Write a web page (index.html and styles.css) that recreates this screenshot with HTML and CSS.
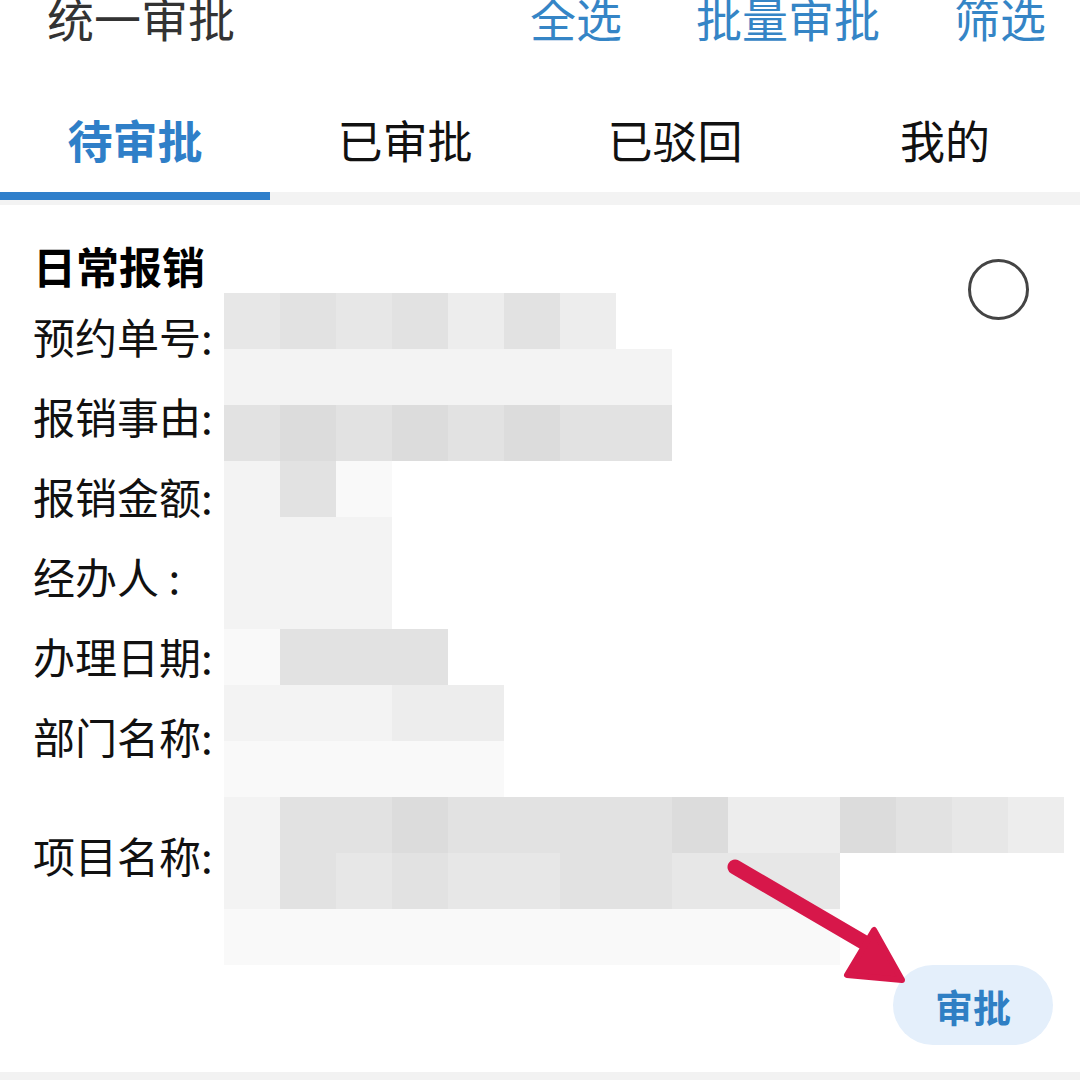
FILE: index.html
```html
<!DOCTYPE html>
<html lang="zh-CN">
<head>
    <meta charset="UTF-8">
    <meta name="viewport" content="width=device-width, initial-scale=1.0">
    <title>统一审批</title>
    <link rel="stylesheet" href="styles.css">
</head>
<body>
    <div class="topbar">
        <div class="title">统一审批</div>
        <div class="actions">
            <span class="action">全选</span>
            <span class="action">批量审批</span>
            <span class="action">筛选</span>
        </div>
    </div>

    <div class="tabs">
        <div class="tab active">待审批</div>
        <div class="tab">已审批</div>
        <div class="tab">已驳回</div>
        <div class="tab">我的</div>
    </div>
    <div class="tab-track"><div class="tab-indicator"></div></div>

    <section class="card">
        <div class="card-head">
            <h2>日常报销</h2>
            <span class="check"></span>
        </div>
        <div class="field">预约单号:</div>
        <div class="field">报销事由:</div>
        <div class="field">报销金额:</div>
        <div class="field">经办人 :</div>
        <div class="field">办理日期:</div>
        <div class="field">部门名称:</div>
        <div class="field tall">项目名称:</div>
        <div class="card-foot">
            <button class="approve">审批</button>
        </div>

        <!-- redacted values -->
        <div class="mosaic">
            <div class="mrow"><i class="g3"></i><i class="g2"></i><i class="g3"></i><i class="g2"></i><i class="g4"></i><i class="g2"></i><i class="g4"></i></div>
            <div class="mrow"><i class="g5"></i><i class="g5"></i><i class="g5"></i><i class="g5"></i><i class="g5"></i><i class="g5"></i><i class="g5"></i><i class="g5"></i></div>
            <div class="mrow"><i class="g2"></i><i class="g1"></i><i class="g2"></i><i class="g1"></i><i class="g2"></i><i class="g1"></i><i class="g2"></i><i class="g2"></i></div>
            <div class="mrow"><i class="g5"></i><i class="g2"></i><i class="g6"></i></div>
            <div class="mrow"><i class="g5"></i><i class="g5"></i><i class="g5"></i></div>
            <div class="mrow"><i class="g5"></i><i class="g5"></i><i class="g5"></i></div>
            <div class="mrow"><i class="g6"></i><i class="g2"></i><i class="g2"></i><i class="g2"></i></div>
            <div class="mrow"><i class="g5"></i><i class="g5"></i><i class="g5"></i><i class="g4"></i><i class="g4"></i></div>
            <div class="mrow"><i class="g6"></i><i class="g6"></i><i class="g6"></i><i class="g6"></i><i class="g6"></i></div>
            <div class="mrow"><i class="g5"></i><i class="g2"></i><i class="g2"></i><i class="g1"></i><i class="g2"></i><i class="g2"></i><i class="g2"></i><i class="g2"></i><i class="g1"></i><i class="g4"></i><i class="g4"></i><i class="g1"></i><i class="g2"></i><i class="g3"></i><i class="g4"></i></div>
            <div class="mrow"><i class="g5"></i><i class="g2"></i><i class="g3"></i><i class="g2"></i><i class="g3"></i><i class="g3"></i><i class="g2"></i><i class="g2"></i><i class="g3"></i><i class="g3"></i><i class="g3"></i></div>
            <div class="mrow"><i class="g6"></i><i class="g6"></i><i class="g6"></i><i class="g6"></i><i class="g6"></i><i class="g6"></i><i class="g6"></i><i class="g6"></i><i class="g6"></i><i class="g6"></i><i class="g6"></i></div>
        </div>

        <svg class="arrow" width="200" height="130" viewBox="0 0 200 130">
            <line x1="10" y1="12" x2="140" y2="88" stroke="#d7174a" stroke-width="15" stroke-linecap="round"/>
            <polygon points="149,75 122,120 177,125" fill="#d7174a" stroke="#d7174a" stroke-width="6" stroke-linejoin="round"/>
        </svg>
    </section>
    <div class="bottom-band"></div>
</body>
</html>
```

FILE: styles.css
```css
body {
    margin: 0;
    background-color: #ffffff;
    font-family: "Noto Sans CJK SC", "Noto Sans", sans-serif;
    color: #111111;
}

.topbar {
    display: flex;
    justify-content: space-between;
    align-items: flex-start;
    height: 95px;
    padding: 0 34px 0 47px;
}

.title {
    font-size: 47px;
    line-height: 34px;
    color: #333333;
}

.actions {
    display: flex;
}

.action {
    font-size: 46px;
    line-height: 34px;
    color: #3585c6;
    margin-left: 74px;
}

.tabs {
    display: grid;
    grid-template-columns: repeat(4, 1fr);
    height: 97px;
}

.tab {
    font-size: 45px;
    line-height: 90px;
    text-align: center;
}

.tab.active {
    color: #2f7fc8;
    font-weight: bold;
}

.tab-track {
    height: 13px;
    background-color: #f3f3f3;
}

.tab-indicator {
    width: 25%;
    height: 8px;
    background-color: #2f7fcb;
}

.card {
    position: relative;
    padding: 0 27px 27px 33px;
}

.card-head {
    display: flex;
    justify-content: space-between;
    align-items: flex-start;
    padding-top: 30px;
    height: 60px;
}

.card-head h2 {
    margin: 0;
    font-size: 43px;
    line-height: 60px;
    font-weight: bold;
    color: #000000;
}

.check {
    width: 55px;
    height: 55px;
    border: 3px solid #444444;
    border-radius: 50%;
    margin-top: 24px;
    margin-right: 24px;
}

.field {
    display: flex;
    align-items: center;
    height: 80px;
    font-size: 42px;
    color: #111111;
}

.field.tall {
    height: 158px;
}

.card-foot {
    display: flex;
    justify-content: flex-end;
    margin-top: 32px;
}

.approve {
    width: 160px;
    height: 80px;
    border: none;
    border-radius: 40px;
    background-color: #e4effb;
    color: #2f7fc4;
    font-family: inherit;
    font-size: 38px;
    font-weight: bold;
}

.mosaic {
    position: absolute;
    left: 224px;
    top: 88px;
}

.mrow {
    display: flex;
    height: 56px;
}

.mrow i {
    width: 56px;
    height: 56px;
}

.g1 { background-color: #dcdcdc; }
.g2 { background-color: #e2e2e2; }
.g3 { background-color: #e7e7e7; }
.g4 { background-color: #ededed; }
.g5 { background-color: #f3f3f3; }
.g6 { background-color: #f9f9f9; }

.arrow {
    position: absolute;
    left: 725px;
    top: 650px;
}

.bottom-band {
    height: 8px;
    background-color: #f2f2f2;
}
```
